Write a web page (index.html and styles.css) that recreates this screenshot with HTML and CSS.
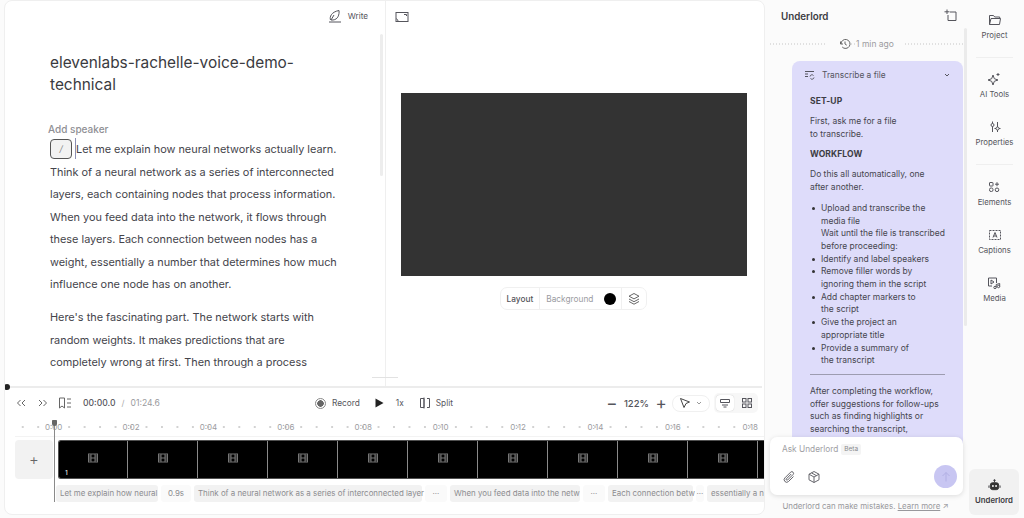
FILE: index.html
```html
<!DOCTYPE html>
<html lang="en">
<head>
<meta charset="utf-8">
<title>Underlord editor</title>
<link rel="stylesheet" href="styles.css">
</head>
<body>
<div class="app">
  <main class="main">
    <section class="workspace">
      <div class="editor">
        <div class="editor-head">
          <button class="write">
            <svg class="ic16" viewBox="0 0 16 16"><path d="M2 14h12M3.500 12c-1-3 .5-8 8.500-9.500.5 4-1 9-6 9.500H4l3-5"/></svg>
            <span>Write</span>
          </button>
        </div>
        <div class="doc">
          <h1 class="title">elevenlabs-rachelle-voice-demo-<br>technical</h1>
          <div class="speaker">Add speaker</div>
          <p class="para first"><span class="kbd">/</span><span class="caret"></span>Let me explain how neural networks actually learn.<br>Think of a neural network as a series of interconnected<br>layers, each containing nodes that process information.<br>When you feed data into the network, it flows through<br>these layers. Each connection between nodes has a<br>weight, essentially a number that determines how much<br>influence one node has on another.</p>
          <p class="para">Here's the fascinating part. The network starts with<br>random weights. It makes predictions that are<br>completely wrong at first. Then through a process</p>
        </div>
        <div class="thumb"></div>
      </div>
      <div class="preview">
        <div class="preview-head">
          <svg class="ic14" viewBox="0 0 14 14"><rect x="1" y="2.500" width="12" height="9"/><path d="M9 4.500h2.500V6M1.500 8.500l2 3h3" /></svg>
        </div>
        <div class="stage-wrap"><div class="stage"></div></div>
        <div class="stage-tools">
          <span class="st-layout">Layout</span>
          <span class="st-bg">Background<i class="swatch"></i></span>
          <span class="st-layers">
            <svg class="ic14" viewBox="0 0 14 14"><path d="M7 1.500l5 2.700-5 2.700-5-2.700zM2 7l5 2.700L12 7M2 9.500l5 2.700 5-2.700"/></svg>
          </span>
        </div>
        <div class="grip"></div>
      </div>
    </section>

    <div class="progress"><i class="progress-dot"></i></div>

    <div class="controls">
      <div class="ctl-left">
        <svg class="ic12" viewBox="0 0 12 12"><path d="M5.500 3L2.500 6l3 3M10 3L7 6l3 3"/></svg>
        <svg class="ic12 gap-next" viewBox="0 0 12 12"><path d="M2 3l3 3-3 3M6.500 3l3 3-3 3"/></svg>
        <svg class="ic14 gap-book" viewBox="0 0 14 14"><path d="M1.500 2h5v10L4 10l-2.500 2zM9 3h4M9 7h4M9 11h4"/></svg>
        <span class="time">00:00.0</span><span class="slash">/</span><span class="total">01:24.6</span>
      </div>
      <div class="ctl-mid">
        <span class="rec"><i class="rec-dot"></i>Record</span>
        <svg class="play" viewBox="0 0 10 10"><path d="M1.500 .5l8 4.500-8 4.500z"/></svg>
        <span class="speed">1x</span>
        <span class="split">
          <svg class="ic12" viewBox="0 0 12 12"><path d="M5 1.500H1.500v9H5zM8 1.500h2.500v9H8M5 .5v11"/></svg>
          Split
        </span>
      </div>
      <div class="ctl-right">
        <span class="zoom-sym">−</span><span class="zoom-val">122%</span><span class="zoom-sym">+</span>
        <span class="pointer">
          <svg class="ic12" viewBox="0 0 12 12"><path d="M1.500 1.500l9 3.500-3.500 1.500L5 10.500z"/></svg>
          <svg class="chev" viewBox="0 0 8 8"><path d="M2 3l2 2 2-2"/></svg>
        </span>
        <span class="views">
          <span class="view on"><svg class="ic12" viewBox="0 0 12 12"><path d="M1.500 2.500h9v3h-9zM3 8h6M4.500 10h3"/></svg></span>
          <span class="view"><svg class="ic12" viewBox="0 0 12 12"><rect x="1.500" y="1.500" width="3.500" height="3.500"/><rect x="7" y="1.500" width="3.500" height="3.500"/><rect x="1.500" y="7" width="3.500" height="3.500"/><rect x="7" y="7" width="3.500" height="3.500"/></svg></span>
        </span>
      </div>
    </div>

    <div class="ruler">
      <span>0:00</span><span>0:02</span><span>0:04</span><span>0:06</span><span>0:08</span><span>0:10</span><span>0:12</span><span>0:14</span><span>0:16</span><span>0:18</span>
    </div>

    <div class="track-row">
      <button class="add">+</button>
      <div class="track">
        <div class="frame"><svg class="film" viewBox="0 0 12 12"><rect x="1.500" y="2" width="9" height="8"/><path d="M4 2v8M8 2v8M1.500 6h9M1.500 4h2.500M1.500 8h2.500M8 4h2.500M8 8h2.500"/></svg><b class="frame-num">1</b></div>
        <div class="frame"><svg class="film" viewBox="0 0 12 12"><rect x="1.500" y="2" width="9" height="8"/><path d="M4 2v8M8 2v8M1.500 6h9M1.500 4h2.500M1.500 8h2.500M8 4h2.500M8 8h2.500"/></svg></div>
        <div class="frame"><svg class="film" viewBox="0 0 12 12"><rect x="1.500" y="2" width="9" height="8"/><path d="M4 2v8M8 2v8M1.500 6h9M1.500 4h2.500M1.500 8h2.500M8 4h2.500M8 8h2.500"/></svg></div>
        <div class="frame"><svg class="film" viewBox="0 0 12 12"><rect x="1.500" y="2" width="9" height="8"/><path d="M4 2v8M8 2v8M1.500 6h9M1.500 4h2.500M1.500 8h2.500M8 4h2.500M8 8h2.500"/></svg></div>
        <div class="frame"><svg class="film" viewBox="0 0 12 12"><rect x="1.500" y="2" width="9" height="8"/><path d="M4 2v8M8 2v8M1.500 6h9M1.500 4h2.500M1.500 8h2.500M8 4h2.500M8 8h2.500"/></svg></div>
        <div class="frame"><svg class="film" viewBox="0 0 12 12"><rect x="1.500" y="2" width="9" height="8"/><path d="M4 2v8M8 2v8M1.500 6h9M1.500 4h2.500M1.500 8h2.500M8 4h2.500M8 8h2.500"/></svg></div>
        <div class="frame"><svg class="film" viewBox="0 0 12 12"><rect x="1.500" y="2" width="9" height="8"/><path d="M4 2v8M8 2v8M1.500 6h9M1.500 4h2.500M1.500 8h2.500M8 4h2.500M8 8h2.500"/></svg></div>
        <div class="frame"><svg class="film" viewBox="0 0 12 12"><rect x="1.500" y="2" width="9" height="8"/><path d="M4 2v8M8 2v8M1.500 6h9M1.500 4h2.500M1.500 8h2.500M8 4h2.500M8 8h2.500"/></svg></div>
        <div class="frame"><svg class="film" viewBox="0 0 12 12"><rect x="1.500" y="2" width="9" height="8"/><path d="M4 2v8M8 2v8M1.500 6h9M1.500 4h2.500M1.500 8h2.500M8 4h2.500M8 8h2.500"/></svg></div>
        <div class="frame"><svg class="film" viewBox="0 0 12 12"><rect x="1.500" y="2" width="9" height="8"/><path d="M4 2v8M8 2v8M1.500 6h9M1.500 4h2.500M1.500 8h2.500M8 4h2.500M8 8h2.500"/></svg></div>
        <div class="frame"></div>
      </div>
    </div>

    <div class="captions">
      <span class="cap w102">Let me explain how neural</span>
      <span class="gap w30">0.9s</span>
      <span class="cap w228">Think of a neural network as a series of interconnected layer</span>
      <span class="gap w22">···</span>
      <span class="cap w130">When you feed data into the netw</span>
      <span class="gap w22">···</span>
      <span class="cap w85">Each connection betw</span>
      <span class="gap w8">···</span>
      <span class="cap w60">essentially a n</span>
    </div>

    <div class="playhead"></div>
  </main>

  <aside class="panel">
    <header class="panel-head">
      <h2>Underlord</h2>
      <svg class="ic14" viewBox="0 0 14 14"><path d="M6 3h6v8.500M4 6v5.500h8M3 .5v4.500M.5 2.800h5"/></svg>
    </header>
    <div class="panel-scroll">
      <div class="stamp">
        <svg class="ic12" viewBox="0 0 12 12"><path d="M1.500 3.500V6h2.500M2 6a4.500 4.500 0 1 1 1.200 3M6 3.500V6l1.800 1.200"/></svg>
        <span>1 min ago</span>
      </div>
      <article class="bubble">
        <div class="bubble-head">
          <svg class="ic12" viewBox="0 0 12 12"><path d="M1 2.500h9M1 5h3M1 7.500h3M6 7.500a2 2 0 0 1 3.500-1M10 8.500a2 2 0 0 1-3.500 1"/></svg>
          <span>Transcribe a file</span>
          <svg class="chev" viewBox="0 0 8 8"><path d="M2 3l2 2 2-2"/></svg>
        </div>
        <div class="bubble-body">
          <h3>SET-UP</h3>
          <p>First, ask me for a file<br>to transcribe.</p>
          <h3>WORKFLOW</h3>
          <p>Do this all automatically, one<br>after another.</p>
          <ul>
            <li>Upload and transcribe the<br>media file<br>Wait until the file is transcribed<br>before proceeding:</li>
            <li>Identify and label speakers</li>
            <li>Remove filler words by<br>ignoring them in the script</li>
            <li>Add chapter markers to<br>the script</li>
            <li>Give the project an<br>appropriate title</li>
            <li>Provide a summary of<br>the transcript</li>
          </ul>
          <hr>
          <p>After completing the workflow,<br>offer suggestions for follow-ups<br>such as finding highlights or<br>searching the transcript,</p>
        </div>
      </article>
    </div>
    <div class="panel-thumb"></div>
    <div class="composer">
      <div class="ask">Ask Underlord <span class="beta">Beta</span></div>
      <div class="composer-foot">
        <svg class="ic14" viewBox="0 0 14 14"><path d="M11.500 6.500l-5 5a2.500 2.500 0 0 1-3.600-3.600l5.800-5.800a1.700 1.700 0 0 1 2.400 2.400l-5.500 5.500a.8.8 0 0 1-1.200-1.200l4.800-4.800"/></svg>
        <svg class="ic14 gap-cube" viewBox="0 0 14 14"><path d="M7 1.500l5 2.700v5.600l-5 2.700-5-2.700V4.200zM2 4.200l5 2.800 5-2.800M7 7v5.500M4.500 2.900l5 2.800"/></svg>
        <span class="send"><svg class="ic12" viewBox="0 0 12 12"><path d="M6 10.500v-9M2.500 5L6 1.500 9.500 5"/></svg></span>
      </div>
    </div>
    <div class="disclaimer">Underlord can make mistakes. <u>Learn more</u> ↗</div>
  </aside>

  <nav class="rail">
    <div class="rail-group">
      <a class="rail-item"><svg class="ic14" viewBox="0 0 14 14"><path d="M1.500 11.500V2.500h4l1.200 1.500h5v1.500M1.500 11.500h10l1-6H3z"/></svg>Project</a>
    </div>
    <div class="rail-group sep">
      <a class="rail-item"><svg class="ic14" viewBox="0 0 14 14"><path d="M6 3l1.300 3.700L11 8 7.300 9.300 6 13l-1.300-3.700L1 8l3.700-1.300zM11 1v3M9.500 2.500h3"/></svg>AI Tools</a>
      <a class="rail-item tight"><svg class="ic14" viewBox="0 0 14 14"><circle cx="4.500" cy="5" r="1.500"/><path d="M4.500 1.500v2M4.500 6.500V12"/><circle cx="9.500" cy="8.500" r="1.500"/><path d="M9.500 2v5M6.500 8.500h1.500M11 8.500h1.500M9.500 10v2"/></svg>Properties</a>
    </div>
    <div class="rail-group sep">
      <a class="rail-item"><svg class="ic14" viewBox="0 0 14 14"><rect x="2.500" y="2.500" width="3.500" height="3.500" rx=".5"/><path d="M8 4.200h4M10 2.200v4"/><rect x="2.500" y="8" width="3.500" height="3.500" rx="1.500"/><circle cx="10" cy="9.800" r="1.800"/></svg>Elements</a>
      <a class="rail-item tight"><svg class="ic14" viewBox="0 0 14 14"><rect x="1.500" y="2.500" width="11" height="9" stroke-dasharray="2 1"/><path d="M5 9.500L7 4.500l2 5M5.700 8h2.600"/></svg>Captions</a>
      <a class="rail-item tight"><svg class="ic14" viewBox="0 0 14 14"><path d="M9.500 7V2h-8v8H5M4 4l3 2-3 2z"/><circle cx="8" cy="11.500" r="1.200"/><circle cx="11.500" cy="10.500" r="1.200"/><path d="M9.200 11.500V8.500l3.500-1v3"/></svg>Media</a>
    </div>
    <a class="rail-item active"><svg class="bot" viewBox="0 0 14 14"><path d="M7 1v2.500" /><circle cx="7" cy="1.500" r=".8"/><rect class="bot-fill" x="2.500" y="4" width="9" height="7.500" rx="2.500"/><circle class="bot-eye" cx="5.300" cy="7.500" r="1"/><circle class="bot-eye" cx="8.700" cy="7.500" r="1"/><path d="M1 7v2.500M13 7v2.500"/></svg>Underlord</a>
  </nav>
</div>
</body>
</html>
```
FILE: styles.css
```css
* { box-sizing: border-box; }
html, body { margin: 0; height: 100%; }
body {
  background: #fbfbfb;
  font-family: Inter, "Liberation Sans", sans-serif;
  color: #45454d;
  overflow: hidden;
}
svg { fill: none; stroke: currentColor; stroke-width: 1; flex: none; display: block; }
button { font: inherit; color: inherit; background: none; border: 0; padding: 0; }
h1, h2, h3, p, ul { margin: 0; padding: 0; }
.ic12 { width: 12px; height: 12px; }
.ic14 { width: 14px; height: 14px; }
.ic16 { width: 16px; height: 16px; }
.chev { width: 8px; height: 8px; }

.app { display: flex; height: 518px; width: 1024px; }

/* main card */
.main {
  position: relative;
  margin-left: 4px;
  width: 761px;
  height: 515px;
  background: #fff;
  border: 1px solid #efefef;
  border-radius: 8px;
  display: flex;
  flex-direction: column;
  overflow: hidden;
}
.workspace { display: flex; height: 385px; flex: none; }

.editor { position: relative; width: 381px; flex: none; border-right: 1px solid #efefef; }
.editor-head { display: flex; justify-content: flex-end; padding: 7px 17px 0 0; height: 51px; }
.write { display: flex; align-items: center; gap: 5px; font-size: 8.200px; color: #55555c; height: 16px; }
.doc { padding-left: 45px; height: 324px; overflow: hidden; }
.title { font-size: 15.400px; font-weight: 400; line-height: 22px; color: #3a3a40; white-space: nowrap; }
.speaker { margin: 26px 0 0 -2px; font-size: 10px; font-weight: 500; color: #8f8f94; line-height: 14px; }
.para { font-size: 10.900px; line-height: 22.500px; color: #44444b; margin-bottom: 10.500px; white-space: nowrap; }
.para.first { margin-top: 2px; }
.kbd {
  display: inline-block;
  overflow: hidden;
  vertical-align: -6px;
  width: 22px;
  height: 20px;
  border: 1.500px solid #555;
  border-radius: 4px;
  background: #f2f2f2;
  color: #888;
  font-size: 9px;
  line-height: 17px;
  text-align: center;
  font-style: italic;
}
.caret { display: inline-block; width: 1px; height: 21px; background: #8d90b4; margin: 0 0 0 3px; vertical-align: -6px; }
.thumb { position: absolute; right: 2px; top: 33px; width: 3px; height: 142px; background: #ededed; border-radius: 2px; }

.preview { position: relative; flex: 1; display: flex; flex-direction: column; align-items: center; }
.preview-head { align-self: stretch; padding: 9px 0 0 9px; height: 92px; color: #55555c; }
.stage-wrap { width: 346px; height: 183px; margin-left: -3px; }
.stage { width: 100%; height: 100%; background: #333; }
.stage-tools {
  display: flex;
  align-items: center;
  margin: 11px 0 0 -3px;
  height: 23px;
  border: 1px solid #f0f0f0;
  border-radius: 7px;
  font-size: 8.300px;
  background: #fff;
}
.stage-tools > span { display: flex; align-items: center; height: 100%; }
.st-layout { padding: 0 6px; font-weight: 500; color: #55555c; border-right: 1px solid #f0f0f0; }
.st-bg { padding: 0 5px 0 6px; color: #9b9b9f; border-right: 1px solid #f0f0f0; gap: 11px; }
.swatch { width: 12px; height: 12px; border-radius: 50%; background: #000; }
.st-layers { padding: 0 5px; color: #666; }
.grip { position: absolute; left: -14px; bottom: 8px; width: 26px; height: 1px; background: #e2e2e2; }

.progress { position: relative; height: 2px; flex: none; background: #ececec; margin-right: 2px; }
.progress-dot { position: absolute; left: -1px; top: -2px; width: 6px; height: 6px; border-radius: 50%; background: #222; }

.controls { display: flex; align-items: center; height: 30px; flex: none; padding: 0 6px 0 10px; font-size: 8.300px; }
.ctl-left, .ctl-mid, .ctl-right { display: flex; align-items: center; }
.ctl-left { width: 300px; color: #666; }
.gap-next { margin-left: 10px; }
.gap-book { margin-left: 9px; }
.time { margin-left: 11px; font-weight: 500; color: #55555c; font-size: 8.600px; }
.slash { margin: 0 6px; color: #aaa; }
.total { color: #9a9a9e; font-size: 8.600px; }
.ctl-mid { color: #55555c; }
.rec { display: flex; align-items: center; gap: 6px; }
.rec-dot { width: 11px; height: 11px; border-radius: 50%; border: 1px solid #888; background: radial-gradient(circle, #666 0 3px, #fff 3.500px); }
.play { width: 10px; height: 10px; margin-left: 14px; fill: #222; stroke: none; }
.speed { margin-left: 12px; }
.split { display: flex; align-items: center; gap: 5px; margin-left: 15px; }
.ctl-right { margin-left: auto; color: #55555c; }
.zoom-sym { font-size: 17px; line-height: 12px; width: 12px; text-align: center; color: #55555c; }
.zoom-val { margin: 0 6px; font-size: 9.500px; font-weight: 500; }
.pointer { display: flex; align-items: center; gap: 4px; height: 17px; padding: 0 6px; margin-left: 5px; border: 1px solid #f0f0f0; border-radius: 8px; color: #444; }
.pointer .chev { color: #999; }
.views { display: flex; align-items: center; gap: 4px; margin-left: 4px; height: 20px; padding: 2px; background: #f7f7f7; border-radius: 5px; }
.view { display: flex; align-items: center; justify-content: center; width: 18px; height: 16px; border-radius: 4px; }
.view.on { background: #fff; box-shadow: 0 0 1px rgba(0,0,0,.25); }

.ruler {
  display: flex;
  flex: none;
  height: 19px;
  margin-left: 10px;
  border-bottom: 1px solid #f3f3f3;
  font-size: 8px;
  line-height: 18px;
  color: #9c9c9f;
  background: radial-gradient(circle, #d2d2d2 .7px, transparent 1px) 0 8px / 15.480px 2px repeat-x;
}
.ruler span { flex: 0 0 77.400px; text-align: center; }

.track-row { display: flex; flex: none; height: 39px; margin-top: 3px; padding-left: 10px; gap: 5px; }
.add {
  width: 38px;
  height: 39px;
  flex: none;
  background: #f2f2f2;
  border-radius: 4px;
  font-size: 15px;
  color: #666;
  font-weight: 300;
}
.track {
  display: flex;
  flex: 1;
  height: 39px;
  border: 1.500px solid #505050;
  border-right: 0;
  border-radius: 3px 0 0 3px;
  background: #000;
  overflow: hidden;
}
.frame { position: relative; flex: 0 0 70px; display: flex; align-items: center; justify-content: center; border-right: 1px solid #8a8a8a; color: #777; padding-bottom: 4px; }
.frame:first-child { flex-basis: 69px; }
.frame:last-child { border-right: 0; }
.film { width: 12px; height: 12px; }
.frame-num { position: absolute; left: 6px; bottom: 1px; color: #ccc; font-size: 6.500px; font-weight: 600; }

.captions { display: flex; flex: none; height: 17px; margin-top: 6px; padding-left: 51px; gap: 3px; font-size: 7.900px; color: #8c8c90; overflow: hidden; }
.cap, .gap { flex: none; height: 17px; line-height: 17px; border-radius: 3px; white-space: nowrap; }
.cap { background: #f2f2f2; padding: 0 0 0 4px; }
.gap { text-align: center; background: #fafafa; }
.w102 { width: 102px; } .w30 { width: 30px; } .w228 { width: 228px; } .w22 { width: 22px; }
.w130 { width: 130px; } .w85 { width: 85px; } .w8 { width: 8px; } .w60 { width: 60px; }

.playhead { position: absolute; left: 49px; top: 419px; width: 1px; height: 82px; background: #8a8a8a; }
.playhead::before { content: ""; position: absolute; left: -2px; top: 0; width: 5px; height: 6px; border-radius: 1px 1px 3px 3px; background: #666; }

/* assistant panel */
.panel { position: relative; width: 200px; flex: none; height: 518px; }
.panel-head { display: flex; align-items: center; justify-content: space-between; height: 32px; padding: 0 7px 0 16px; color: #55555c; }
.panel-head h2 { font-size: 9.800px; font-weight: 600; color: #3c3c42; }
.panel-scroll { height: 415px; overflow: hidden; }
.stamp {
  display: flex;
  align-items: center;
  justify-content: center;
  gap: 5px;
  height: 24px;
  margin: 0 0 0 4px;
  padding-left: 10px;
  font-size: 8.500px;
  color: #9b9b9f;
  background: radial-gradient(circle, #e0e0e0 .6px, transparent .9px) 0 50% / 3px 2px repeat-x;
}
.stamp .ic12, .stamp span { background: #fbfbfb; }
.stamp span { padding-right: 11px; }
.stamp .ic12 { color: #666; box-shadow: -14px 0 0 #fbfbfb; }
.bubble { margin: 5px 2px 0 27px; background: #dedcfa; border-radius: 8px; padding: 8px 0 8px 18px; color: #46464f; }
.bubble-head { display: flex; align-items: center; gap: 6px; height: 12px; font-size: 8.400px; margin: 0 12px 0 -6px; color: #55555f; }
.bubble-head .chev { margin-left: auto; }
.bubble-body { margin-top: 14px; font-size: 8.500px; line-height: 12.700px; white-space: nowrap; }
.bubble-body h3 { font-size: 8.500px; font-weight: 700; margin-bottom: 7px; color: #3c3c44; line-height: 13px; letter-spacing: .1px; }
.bubble-body p { margin-bottom: 8px; }
.bubble-body ul { list-style: none; margin: 8px 0 0; }
.bubble-body li { position: relative; padding-left: 11px; }
.bubble-body li::before { content: ""; position: absolute; left: 2px; top: 5px; width: 3px; height: 3px; border-radius: 50%; background: #333; }
.bubble-body hr { border: 0; height: 1px; background: #9d9cb0; margin: 7px 18px 10px 0; }
.panel-thumb { position: absolute; right: -2px; top: 28px; width: 3px; height: 298px; background: #ebebeb; border-radius: 2px; }
.composer {
  position: absolute;
  left: 5px;
  top: 437px;
  width: 193px;
  height: 58px;
  background: #fff;
  border-radius: 7px;
  box-shadow: 0 1px 5px rgba(0,0,0,.13);
  padding: 6px 6px 0 12px;
}
.ask { display: flex; align-items: center; gap: 3px; height: 12px; font-size: 8.300px; color: #a0a0a4; white-space: nowrap; }
.beta { background: #f4f4f4; border-radius: 2px; padding: 1px 3px; font-size: 6.500px; color: #8a8a8e; line-height: 9px; }
.composer-foot { display: flex; align-items: center; margin-top: 10px; color: #66666c; }
.gap-cube { margin-left: 11px; }
.send { margin-left: auto; display: flex; align-items: center; justify-content: center; width: 23px; height: 23px; border-radius: 50%; background: #c8c6f2; color: #b2b0e4; }
.disclaimer { position: absolute; left: 1px; right: 0; top: 500px; text-align: center; font-size: 7.900px; line-height: 12px; color: #98989c; white-space: nowrap; }

/* right rail */
.rail { position: relative; width: 59px; flex: none; display: flex; flex-direction: column; align-items: center; height: 518px; padding-top: 13px; }
.rail-group { width: 37px; display: flex; flex-direction: column; align-items: center; }
.rail-group.sep { border-top: 1px solid #efefef; margin-top: 16px; padding-top: 14px; width: 37px; }
.rail-group.sep:nth-child(3) { padding-top: 15px; }
.rail-item { display: flex; flex-direction: column; align-items: center; gap: 3px; font-size: 7.800px; line-height: 11px; color: #55555c; white-space: nowrap; }
.rail-item.tight { margin-top: 20px; }
.rail-item.active {
  position: absolute;
  left: 4px;
  top: 469px;
  width: 50px;
  height: 46px;
  justify-content: center;
  gap: 3px;
  background: #f1f1f1;
  border-radius: 6px;
  font-weight: 600;
  color: #3b3b40;
}
.bot { width: 13px; height: 13px; }
.bot-fill { fill: #333; stroke: #333; }
.bot-eye { fill: #fff; stroke: none; }
```
